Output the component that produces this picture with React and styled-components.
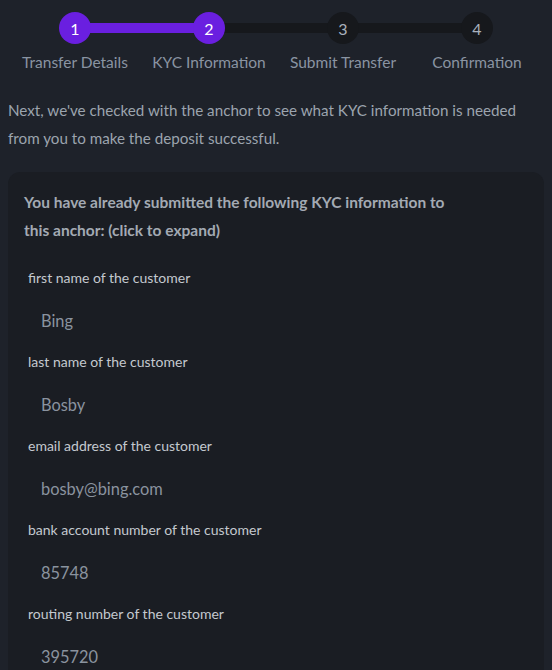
import React from "react";
import styled, { createGlobalStyle } from "styled-components";

const Global = createGlobalStyle`
  html, body { margin: 0; padding: 0; background: #1e222a; }
  body { font-family: Lato, "Noto Sans", sans-serif; }
  * { box-sizing: border-box; }
`;

const Page = styled.div`
  padding: 12px 8px 0;
  height: 670px;
  overflow: hidden;
`;

const Stepper = styled.ol`
  list-style: none;
  margin: 0;
  padding: 0;
  display: grid;
  grid-template-columns: repeat(4, 1fr);
`;

const Step = styled.li`
  position: relative;
  display: flex;
  flex-direction: column;
  align-items: center;
  gap: 6px;
  &::after {
    content: "";
    display: ${(p) => (p.$last ? "none" : "block")};
    position: absolute;
    top: 11px;
    left: 50%;
    width: 100%;
    height: 10px;
    background: ${(p) => (p.$lineActive ? "#6a1fe0" : "#16181c")};
    z-index: 0;
  }
`;

const Circle = styled.span`
  position: relative;
  z-index: 1;
  width: 32px;
  height: 32px;
  border-radius: 50%;
  display: flex;
  align-items: center;
  justify-content: center;
  font-size: 16px;
  background: ${(p) => (p.$active ? "#6a1fe0" : "#16181c")};
  color: ${(p) => (p.$active ? "#ffffff" : "#a9b1bc")};
`;

const StepLabel = styled.span`
  font-size: 15.5px;
  line-height: 24px;
  color: #8a94a2;
  white-space: nowrap;
`;

const Intro = styled.p`
  margin: 22px 0 20px;
  font-size: 15.2px;
  line-height: 28px;
  color: #9ca4ae;
`;

const Card = styled.section`
  background: #1a1d23;
  border-radius: 12px;
  padding: 16px 16px 24px;
`;

const CardTitle = styled.h2`
  margin: 0 0 24px;
  max-width: 436px;
  font-size: 15.5px;
  line-height: 28px;
  font-weight: 700;
  color: #a3aab3;
`;

const FieldList = styled.div`
  display: flex;
  flex-direction: column;
  gap: 19px;
`;

const Field = styled.div`
  display: flex;
  flex-direction: column;
  gap: 21px;
`;

const FieldLabel = styled.span`
  padding-left: 4px;
  font-size: 14px;
  line-height: 20px;
  color: #c4c9cf;
`;

const FieldValue = styled.span`
  padding-left: 17px;
  font-size: 16.4px;
  line-height: 24px;
  color: #8a939f;
`;

const steps = [
  { n: 1, label: "Transfer Details", active: true, lineActive: true },
  { n: 2, label: "KYC Information", active: true },
  { n: 3, label: "Submit Transfer" },
  { n: 4, label: "Confirmation" },
];

const fields = [
  ["first name of the customer", "Bing"],
  ["last name of the customer", "Bosby"],
  ["email address of the customer", "bosby@bing.com"],
  ["bank account number of the customer", "85748"],
  ["routing number of the customer", "395720"],
];

export default function App() {
  return (
    <>
      <Global />
      <Page>
        <Stepper>
          {steps.map((s, i) => (
            <Step key={s.n} $last={i === steps.length - 1} $lineActive={s.lineActive}>
              <Circle $active={s.active}>{s.n}</Circle>
              <StepLabel>{s.label}</StepLabel>
            </Step>
          ))}
        </Stepper>
        <Intro>
          Next, we've checked with the anchor to see what KYC information is needed
          from you to make the deposit successful.
        </Intro>
        <Card>
          <CardTitle>
            You have already submitted the following KYC information to this anchor: (click to expand)
          </CardTitle>
          <FieldList>
            {fields.map(([label, value]) => (
              <Field key={label}>
                <FieldLabel>{label}</FieldLabel>
                <FieldValue>{value}</FieldValue>
              </Field>
            ))}
          </FieldList>
        </Card>
      </Page>
    </>
  );
}
